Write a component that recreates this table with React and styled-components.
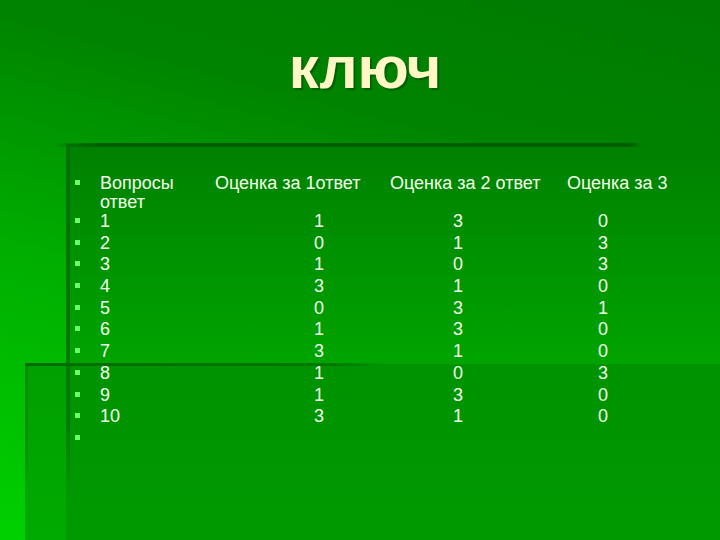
import React from "react";
import styled, { createGlobalStyle } from "styled-components";

const Global = createGlobalStyle`
  html, body { margin: 0; padding: 0; background: #008a00; }
  body { font-family: "Liberation Sans", Arial, sans-serif; }
`;

const Slide = styled.div`
  width: 720px;
  height: 540px;
  overflow: hidden;
  display: flex;
  flex-direction: column;
  background:
    linear-gradient(to right, #006c00, #007800 85%, rgba(0, 120, 0, 0)) 25px 363px / 360px 3px no-repeat,
    linear-gradient(to bottom, #008800, #009000 75%, rgba(0, 160, 0, 0)) 25px 364px / 3px 120px no-repeat,
    linear-gradient(to bottom, #007000, #007c00 80%, rgba(0, 120, 0, 0)) 66px 144px / 4px 350px no-repeat,
    linear-gradient(to right, rgba(0, 90, 0, 0), #005e00 8%, #005e00 98%, rgba(0, 90, 0, 0)) 52px 143px / 590px 4px no-repeat,
    linear-gradient(to bottom, #009200, #009a00) 66px 364px / 654px 176px no-repeat,
    linear-gradient(to bottom, #00a000, #00aa00) 25px 364px / 41px 176px no-repeat,
    linear-gradient(to bottom, #008000, #00a400) 66px 144px / 654px 220px no-repeat,
    linear-gradient(195deg, #007a00 0%, #008400 28%, #00ae00 60%, #00d000 100%);
`;

const TitleBar = styled.header`
  height: 144px;
  box-sizing: border-box;
  padding: 38px 0 0 10px;
  text-align: center;
`;

const Title = styled.h1`
  margin: 0;
  font-family: "Liberation Sans", Arial, sans-serif;
  font-weight: 700;
  font-size: 60px;
  line-height: 60px;
  color: #fff7c6;
  text-shadow: 2px 2px 1px rgba(0, 70, 0, 0.55);
`;

const Body = styled.ul`
  list-style: none;
  margin: 0;
  padding: 30px 0 0 75px;
  color: #f2ffec;
  font-size: 18px;
`;

const HeaderRow = styled.li`
  display: grid;
  grid-template-columns: 25px 115px 175px 177px auto;
  align-items: start;
  line-height: 18.5px;
  white-space: nowrap;
`;

const DataRow = styled.li`
  display: grid;
  grid-template-columns: 25px 200px 38px 101px 38px 107px 38px;
  align-items: start;
  line-height: 21.7px;
  height: 21.7px;
`;

const Bullet = styled.span`
  display: block;
  width: 5px;
  height: 5px;
  margin-top: ${(p) => p.$top}px;
  background: #66ff66;
`;

const Cell = styled.span`
  display: block;
`;

const Num = styled.span`
  display: block;
  text-align: center;
  grid-column: ${(p) => p.$col};
`;

const rows = [
  ["1", "1", "3", "0"],
  ["2", "0", "1", "3"],
  ["3", "1", "0", "3"],
  ["4", "3", "1", "0"],
  ["5", "0", "3", "1"],
  ["6", "1", "3", "0"],
  ["7", "3", "1", "0"],
  ["8", "1", "0", "3"],
  ["9", "1", "3", "0"],
  ["10", "3", "1", "0"],
];

export default function App() {
  return (
    <>
      <Global />
      <Slide>
        <TitleBar>
          <Title>ключ</Title>
        </TitleBar>
        <Body>
          <HeaderRow>
            <Bullet $top={6} />
            <Cell>
              Вопросы
              <br />
              ответ
            </Cell>
            <Cell>Оценка за 1ответ</Cell>
            <Cell>Оценка за 2 ответ</Cell>
            <Cell>Оценка за 3</Cell>
          </HeaderRow>
          {rows.map(([q, a, b, c]) => (
            <DataRow key={q}>
              <Bullet $top={7} />
              <Cell>{q}</Cell>
              <Num $col={3}>{a}</Num>
              <Num $col={5}>{b}</Num>
              <Num $col={7}>{c}</Num>
            </DataRow>
          ))}
          <DataRow>
            <Bullet $top={7} />
          </DataRow>
        </Body>
      </Slide>
    </>
  );
}
